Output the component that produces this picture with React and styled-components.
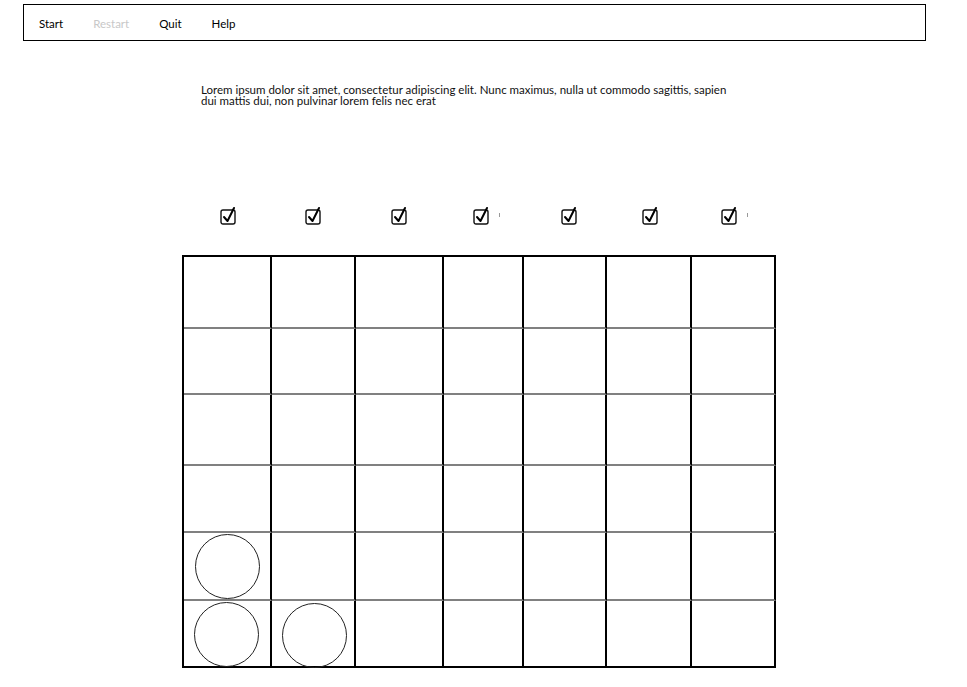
import React from 'react'
import styled, { createGlobalStyle } from 'styled-components'

const COLS = '88px 84px 88px 80px 83px 85px 84px'
const ROWS = '72px 66px 71px 67px 68px 67px'

const GlobalStyle = createGlobalStyle`
    body {
        margin: 0;
        background: #ffffff;
        font-family: 'Lato', 'Liberation Sans', sans-serif;
        color: #000000;
    }
`

const Page = styled.div`
    width: 967px;
    height: 687px;
    padding-top: 4px;
    box-sizing: border-box;
`

const Toolbar = styled.nav`
    margin-left: 23px;
    width: 903px;
    height: 37px;
    box-sizing: border-box;
    border: 1px solid #000;
    display: flex;
    align-items: center;
    padding-left: 15px;
    padding-top: 2px;
    gap: 30px;
`

const MenuItem = styled.span`
    font-size: 11.5px;
    color: ${(p) => (p.disabled ? '#c8c8c8' : '#000')};
`

const Intro = styled.p`
    margin: 43px 0 0 201px;
    font-size: 11.5px;
    line-height: 11px;
    color: #111;
`

const Line = styled.span`
    display: block;
    height: 11px;
`

const Game = styled.section`
    margin-left: 182px;
    margin-top: 99px;
    display: flex;
    flex-direction: column;
`

const CheckRow = styled.div`
    display: grid;
    grid-template-columns: ${COLS};
    padding-left: 2px;
    height: 20px;
    margin-bottom: 30px;
`

const CheckCell = styled.div`
    display: flex;
    align-items: center;
    justify-content: center;
    gap: 2px;
    transform: translateX(${(p) => p.shift || 0}px);
`

const Tick = styled.span`
    width: 1px;
    height: 4px;
    background: #999;
    margin-left: 6px;
`

const Board = styled.div`
    display: grid;
    grid-template-columns: ${COLS};
    grid-template-rows: ${ROWS};
    width: fit-content;
    border-left: 2px solid #000;
    border-top: 2px solid #000;
`

const Cell = styled.div`
    box-sizing: border-box;
    border-right: 2px solid #000;
    border-bottom: 2px solid ${(p) => (p.last ? '#000' : '#808080')};
    display: flex;
    align-items: center;
    justify-content: center;
`

const Disc = styled.div`
    width: 63px;
    height: 63px;
    border-radius: 50%;
    border: 1px solid #222;
    transform: translate(${(p) => p.dx || 0}px, ${(p) => p.dy || 0}px);
`

const CheckIcon = () => (
    <svg width="18" height="19" viewBox="0 0 18 19">
        <rect x="1" y="4" width="14" height="14" rx="2" fill="none" stroke="#111" strokeWidth="1.4" />
        <path d="M4 11 L7.5 15 L14 2" fill="none" stroke="#000" strokeWidth="2" strokeLinecap="round" strokeLinejoin="round" />
    </svg>
)

const discs = {
    '4-0': { dx: 0, dy: 0 },
    '5-0': { dx: -1, dy: 1 },
    '5-1': { dx: 1, dy: 2 },
}

const checkShifts = [1, 0, 0, 2, 4, 1, 0]

const App = () => {
    const rows = [0, 1, 2, 3, 4, 5]
    const cols = [0, 1, 2, 3, 4, 5, 6]

    return (
        <Page>
            <GlobalStyle />
            <Toolbar>
                <MenuItem>Start</MenuItem>
                <MenuItem disabled>Restart</MenuItem>
                <MenuItem>Quit</MenuItem>
                <MenuItem>Help</MenuItem>
            </Toolbar>
            <Intro>
                <Line>Lorem ipsum dolor sit amet, consectetur adipiscing elit. Nunc maximus, nulla ut commodo sagittis, sapien</Line>
                <Line>dui mattis dui, non pulvinar lorem felis nec erat</Line>
            </Intro>
            <Game>
                <CheckRow>
                    {cols.map((c) => (
                        <CheckCell key={c} shift={checkShifts[c]}>
                            <CheckIcon />
                            {(c === 3 || c === 6) && <Tick />}
                        </CheckCell>
                    ))}
                </CheckRow>
                <Board>
                    {rows.map((r) =>
                        cols.map((c) => {
                            const d = discs[`${r}-${c}`]
                            return (
                                <Cell key={`${r}-${c}`} last={r === 5}>
                                    {d && <Disc dx={d.dx} dy={d.dy} />}
                                </Cell>
                            )
                        })
                    )}
                </Board>
            </Game>
        </Page>
    )
}

export default App
